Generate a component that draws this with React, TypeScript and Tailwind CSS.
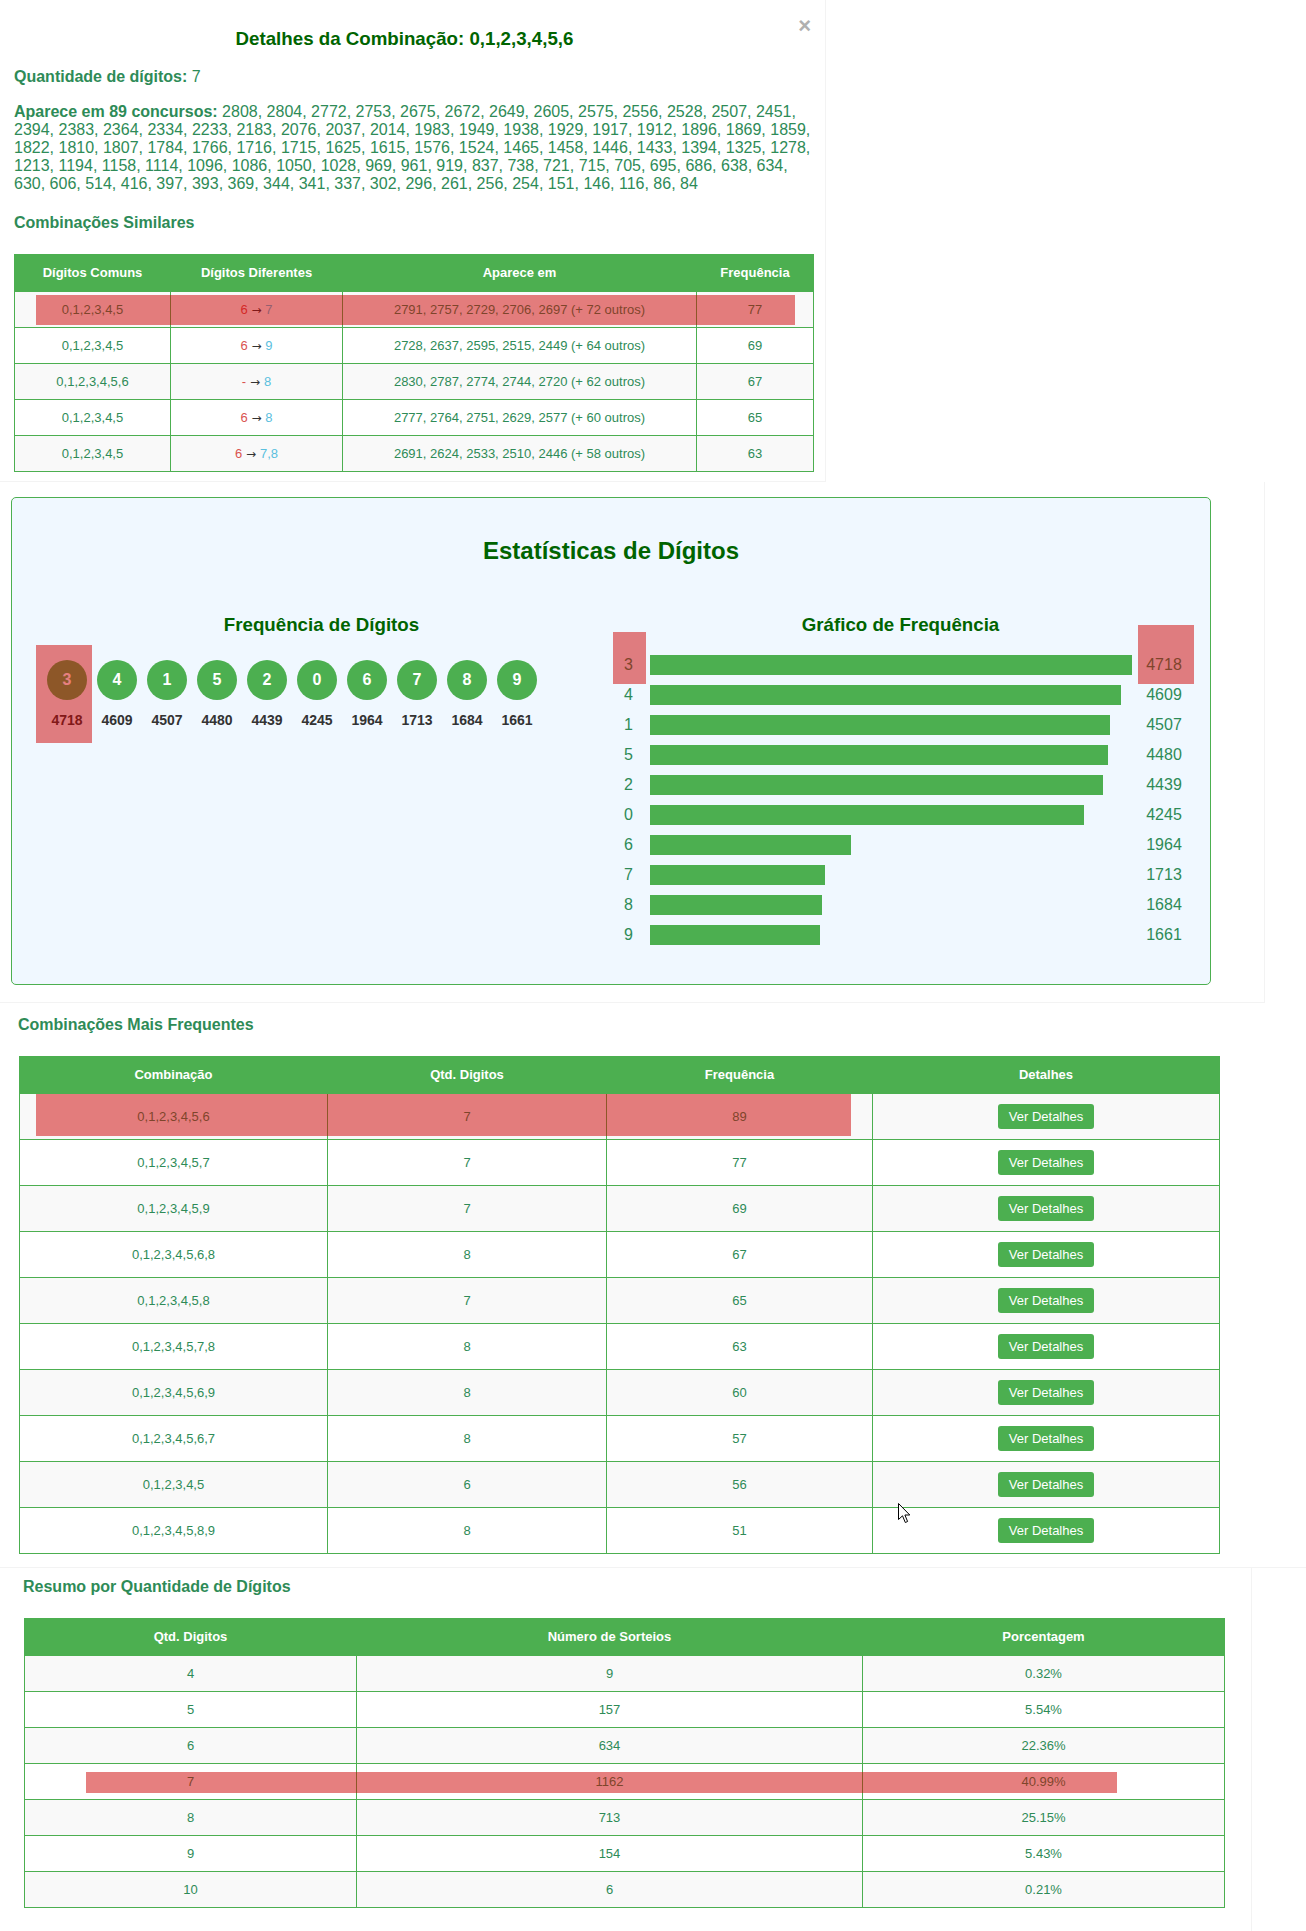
const SIMILAR = [
  { common: '0,1,2,3,4,5', from: '6', to: '7', seen: '2791, 2757, 2729, 2706, 2697 (+ 72 outros)', freq: 77 },
  { common: '0,1,2,3,4,5', from: '6', to: '9', seen: '2728, 2637, 2595, 2515, 2449 (+ 64 outros)', freq: 69 },
  { common: '0,1,2,3,4,5,6', from: '-', to: '8', seen: '2830, 2787, 2774, 2744, 2720 (+ 62 outros)', freq: 67 },
  { common: '0,1,2,3,4,5', from: '6', to: '8', seen: '2777, 2764, 2751, 2629, 2577 (+ 60 outros)', freq: 65 },
  { common: '0,1,2,3,4,5', from: '6', to: '7,8', seen: '2691, 2624, 2533, 2510, 2446 (+ 58 outros)', freq: 63 },
];

const CONTESTS =
  '2808, 2804, 2772, 2753, 2675, 2672, 2649, 2605, 2575, 2556, 2528, 2507, 2451, 2394, 2383, 2364, 2334, 2233, 2183, 2076, 2037, 2014, 1983, 1949, 1938, 1929, 1917, 1912, 1896, 1869, 1859, 1822, 1810, 1807, 1784, 1766, 1716, 1715, 1625, 1615, 1576, 1524, 1465, 1458, 1446, 1433, 1394, 1325, 1278, 1213, 1194, 1158, 1114, 1096, 1086, 1050, 1028, 969, 961, 919, 837, 738, 721, 715, 705, 695, 686, 638, 634, 630, 606, 514, 416, 397, 393, 369, 344, 341, 337, 302, 296, 261, 256, 254, 151, 146, 116, 86, 84';

const DIGITS = [
  { d: 3, n: 4718 },
  { d: 4, n: 4609 },
  { d: 1, n: 4507 },
  { d: 5, n: 4480 },
  { d: 2, n: 4439 },
  { d: 0, n: 4245 },
  { d: 6, n: 1964 },
  { d: 7, n: 1713 },
  { d: 8, n: 1684 },
  { d: 9, n: 1661 },
];

const TOP = [
  { combo: '0,1,2,3,4,5,6', qtd: 7, freq: 89 },
  { combo: '0,1,2,3,4,5,7', qtd: 7, freq: 77 },
  { combo: '0,1,2,3,4,5,9', qtd: 7, freq: 69 },
  { combo: '0,1,2,3,4,5,6,8', qtd: 8, freq: 67 },
  { combo: '0,1,2,3,4,5,8', qtd: 7, freq: 65 },
  { combo: '0,1,2,3,4,5,7,8', qtd: 8, freq: 63 },
  { combo: '0,1,2,3,4,5,6,9', qtd: 8, freq: 60 },
  { combo: '0,1,2,3,4,5,6,7', qtd: 8, freq: 57 },
  { combo: '0,1,2,3,4,5', qtd: 6, freq: 56 },
  { combo: '0,1,2,3,4,5,8,9', qtd: 8, freq: 51 },
];

const SUMMARY = [
  { qtd: 4, draws: 9, pct: '0.32%' },
  { qtd: 5, draws: 157, pct: '5.54%' },
  { qtd: 6, draws: 634, pct: '22.36%' },
  { qtd: 7, draws: 1162, pct: '40.99%' },
  { qtd: 8, draws: 713, pct: '25.15%' },
  { qtd: 9, draws: 154, pct: '5.43%' },
  { qtd: 10, draws: 6, pct: '0.21%' },
];

const MAX = 4718;
const FONT = "font-['Liberation_Sans',Arial,sans-serif]";

// annotation overlay (the red marks painted over the screenshot)
function Mark({ className }: { className: string }) {
  return <div className={`pointer-events-none absolute bg-[rgba(205,0,0,0.5)] ${className}`} />;
}

function Th({ children }: { children: React.ReactNode }) {
  return <th className="border border-[#4caf50] p-0 text-center text-[13px] font-bold text-white">{children}</th>;
}

function Td({ children }: { children: React.ReactNode }) {
  return <td className="border border-[#4caf50] p-0 text-center align-middle text-[13px] text-[#2e8b57]">{children}</td>;
}

function Cursor() {
  return (
    <svg className="pointer-events-none absolute left-[898px] top-[500px]" width="13" height="21" viewBox="0 0 13 21">
      <path d="M0.5 0.5 L0.5 16.5 L4.5 12.8 L7.3 19.5 L9.6 18.5 L6.9 12 L11.8 12 Z" fill="#fff" stroke="#000" strokeWidth="1" strokeLinejoin="round" />
    </svg>
  );
}

export default function App() {
  return (
    <div className={`${FONT} min-h-[1931px] w-[1306px] bg-white`}>
      {/* detalhes da combinação */}
      <section className="relative h-[482px] w-[826px] border-r border-b border-[#f3f3f3] pl-[14px] pr-[12px]">
        <button type="button" className="absolute right-[14px] top-[15px] text-[22px] font-bold leading-none text-[#b0b0b0]">
          ×
        </button>
        <h3 className="pr-[18px] pt-[28px] text-center text-[18.72px] font-bold leading-[22px] text-[#006400]">
          Detalhes da Combinação: 0,1,2,3,4,5,6
        </h3>
        <p className="mt-[18px] text-[16px] leading-[18px] text-[#2e8b57]">
          <strong>Quantidade de dígitos:</strong> 7
        </p>
        <p className="mt-[17px] text-[16px] leading-[18px] text-[#2e8b57]">
          <strong>Aparece em 89 concursos:</strong> {CONTESTS}
        </p>
        <h4 className="mt-[21px] text-[16px] font-bold leading-[18px] text-[#2e8b57]">Combinações Similares</h4>
        <table className="mt-[22px] w-[799px] table-fixed border-collapse">
          <colgroup>
            <col className="w-[156px]" />
            <col className="w-[172px]" />
            <col className="w-[354px]" />
            <col className="w-[117px]" />
          </colgroup>
          <thead>
            <tr className="h-[37px] bg-[#4caf50]">
              <Th>Dígitos Comuns</Th>
              <Th>Dígitos Diferentes</Th>
              <Th>Aparece em</Th>
              <Th>Frequência</Th>
            </tr>
          </thead>
          <tbody>
            {SIMILAR.map((row, i) => (
              <tr key={i} className={`h-[36px] ${i % 2 === 0 ? 'bg-[#f9f9f9]' : 'bg-white'}`}>
                <Td>{row.common}</Td>
                <Td>
                  <span className="text-[#d9534f]">{row.from}</span>
                  <span className="font-['DejaVu_Sans',sans-serif] text-[12px] text-[#333]"> → </span>
                  <span className="text-[#5bc0de]">{row.to}</span>
                </Td>
                <Td>{row.seen}</Td>
                <Td>{row.freq}</Td>
              </tr>
            ))}
          </tbody>
        </table>
        <Mark className="left-[36px] top-[295px] h-[30px] w-[759px]" />
      </section>

      {/* estatísticas de dígitos */}
      <section className="relative h-[521px] w-[1265px] border-r border-b border-[#f3f3f3] pl-[11px] pt-[15px]">
        <div className="h-[488px] w-[1200px] rounded-[5px] border border-[#4caf50] bg-[#f0f8ff] p-[20px]">
          <h2 className="mt-[19px] text-center text-[24px] font-bold leading-[28px] text-[#006400]">Estatísticas de Dígitos</h2>
          <div className="mt-[49px] grid grid-cols-2">
            <div>
              <h3 className="text-center text-[18.72px] font-bold leading-[22px] text-[#006400]">Frequência de Dígitos</h3>
              <div className="mt-[24px] flex gap-[10px] pl-[15px]">
                {DIGITS.map((x) => (
                  <div key={x.d} className="flex w-[40px] flex-col items-center">
                    <span className="grid size-[40px] place-items-center rounded-full bg-[#4caf50] text-[16px] font-bold text-white">
                      {x.d}
                    </span>
                    <span className="mt-[12px] text-[14px] font-bold leading-[16px] text-[#333]">{x.n}</span>
                  </div>
                ))}
              </div>
            </div>
            <div>
              <h3 className="text-center text-[18.72px] font-bold leading-[22px] text-[#006400]">Gráfico de Frequência</h3>
              <div className="mt-[19px] flex flex-col gap-[10px]">
                {DIGITS.map((x) => (
                  <div key={x.d} className="flex h-[20px] items-center text-[16px] text-[#2e8b57]">
                    <span className="w-[35px] shrink-0 text-center">{x.d}</span>
                    <div className="ml-[4px] h-[20px] w-[482px] shrink-0">
                      <div className="h-full bg-[#4caf50]" style={{ width: `${(x.n / MAX) * 482}px` }} />
                    </div>
                    <span className="ml-[4px] w-[56px] shrink-0 text-center">{x.n}</span>
                  </div>
                ))}
              </div>
            </div>
          </div>
        </div>
        <Mark className="left-[36px] top-[163px] h-[98px] w-[56px]" />
        <Mark className="left-[613px] top-[150px] h-[52px] w-[33px]" />
        <Mark className="left-[1138px] top-[143px] h-[59px] w-[56px]" />
      </section>

      {/* combinações mais frequentes */}
      <section className="relative h-[565px] w-full border-b border-[#f3f3f3] px-[18px] pt-[13px]">
        <h3 className="text-[16px] font-bold leading-[18px] text-[#2e8b57]">Combinações Mais Frequentes</h3>
        <table className="ml-[1px] mt-[22px] w-[1200px] table-fixed border-collapse">
          <colgroup>
            <col className="w-[308px]" />
            <col className="w-[279px]" />
            <col className="w-[266px]" />
            <col className="w-[347px]" />
          </colgroup>
          <thead>
            <tr className="h-[37px] bg-[#4caf50]">
              <Th>Combinação</Th>
              <Th>Qtd. Digitos</Th>
              <Th>Frequência</Th>
              <Th>Detalhes</Th>
            </tr>
          </thead>
          <tbody>
            {TOP.map((row, i) => (
              <tr key={i} className={`h-[46px] ${i % 2 === 0 ? 'bg-[#f9f9f9]' : 'bg-white'}`}>
                <Td>{row.combo}</Td>
                <Td>{row.qtd}</Td>
                <Td>{row.freq}</Td>
                <Td>
                  <button type="button" className="h-[25px] w-[96px] rounded-[3px] bg-[#4caf50] text-[13px] text-white">
                    Ver Detalhes
                  </button>
                </Td>
              </tr>
            ))}
          </tbody>
        </table>
        <Mark className="left-[36px] top-[91px] h-[42px] w-[815px]" />
        <Cursor />
      </section>

      {/* resumo por quantidade */}
      <section className="relative h-[363px] w-[1252px] border-r border-[#f3f3f3] px-[23px] pt-[10px]">
        <h3 className="text-[16px] font-bold leading-[18px] text-[#2e8b57]">Resumo por Quantidade de Dígitos</h3>
        <table className="ml-[1px] mt-[22px] w-[1200px] table-fixed border-collapse">
          <colgroup>
            <col className="w-[332px]" />
            <col className="w-[506px]" />
            <col className="w-[362px]" />
          </colgroup>
          <thead>
            <tr className="h-[37px] bg-[#4caf50]">
              <Th>Qtd. Digitos</Th>
              <Th>Número de Sorteios</Th>
              <Th>Porcentagem</Th>
            </tr>
          </thead>
          <tbody>
            {SUMMARY.map((row, i) => (
              <tr key={row.qtd} className={`h-[36px] ${i % 2 === 0 ? 'bg-[#f9f9f9]' : 'bg-white'}`}>
                <Td>{row.qtd}</Td>
                <Td>{row.draws}</Td>
                <Td>{row.pct}</Td>
              </tr>
            ))}
          </tbody>
        </table>
        <Mark className="left-[86px] top-[204px] h-[21px] w-[1031px]" />
      </section>
    </div>
  );
}
